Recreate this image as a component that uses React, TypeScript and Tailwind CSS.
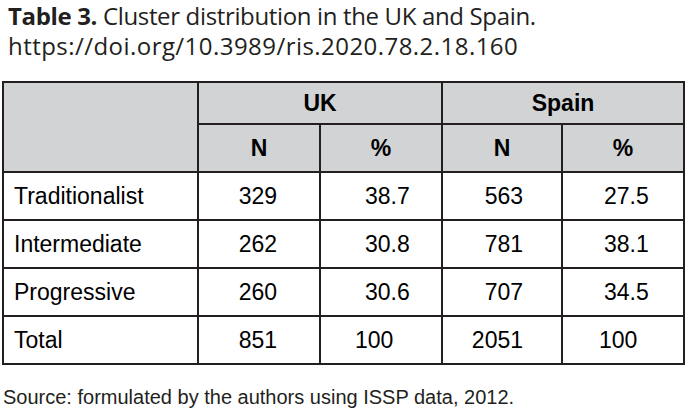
const rows = [
  { label: "Traditionalist", ukN: "329", ukP: "38.7", esN: "563", esP: "27.5" },
  { label: "Intermediate", ukN: "262", ukP: "30.8", esN: "781", esP: "38.1" },
  { label: "Progressive", ukN: "260", ukP: "30.6", esN: "707", esP: "34.5" },
];

const cell = "border-2 border-[#231f20] align-middle p-0";

export default function App() {
  return (
    <div className="w-[690px] h-[409px] bg-white text-black overflow-hidden">
      <div className="pl-[8px] pt-[1px] text-[24px] leading-[30px] font-['Open_Sans',sans-serif] text-[#231f20]">
        <p className="tracking-[-0.35px]">
          <span className="font-bold">Table 3.</span> Cluster distribution in the UK and Spain.
        </p>
        <p className="tracking-[0.45px]">https://doi.org/10.3989/ris.2020.78.2.18.160</p>
      </div>

      <table className="mt-[20px] ml-[2px] w-[681px] table-fixed border-collapse font-['Liberation_Sans',Arial,sans-serif] text-[23px] leading-none text-black">
        <colgroup>
          <col className="w-[195px]" />
          <col className="w-[122px]" />
          <col className="w-[122px]" />
          <col className="w-[120px]" />
          <col className="w-[122px]" />
        </colgroup>
        <thead className="bg-[#d1d3d4] font-bold">
          <tr className="h-[42px]">
            <th rowSpan={2} className={cell}></th>
            <th colSpan={2} className={`${cell} text-center`}>UK</th>
            <th colSpan={2} className={`${cell} text-center`}>Spain</th>
          </tr>
          <tr className="h-[48px]">
            <th className={`${cell} text-center`}>N</th>
            <th className={`${cell} text-center`}>%</th>
            <th className={`${cell} text-center`}>N</th>
            <th className={`${cell} text-center`}>%</th>
          </tr>
        </thead>
        <tbody>
          {rows.map((r) => (
            <tr key={r.label} className="h-[48px]">
              <td className={`${cell} pl-[10px]`}>{r.label}</td>
              <td className={`${cell} text-right pr-[42px]`}>{r.ukN}</td>
              <td className={`${cell} pl-[44px]`}>{r.ukP}</td>
              <td className={`${cell} text-right pr-[38px]`}>{r.esN}</td>
              <td className={`${cell} pl-[41px]`}>{r.esP}</td>
            </tr>
          ))}
          <tr className="h-[48px]">
            <td className={`${cell} pl-[10px]`}>Total</td>
            <td className={`${cell} text-right pr-[42px]`}>851</td>
            <td className={`${cell} pl-[34px]`}>100</td>
            <td className={`${cell} text-right pr-[38px]`}>2051</td>
            <td className={`${cell} pl-[36px]`}>100</td>
          </tr>
        </tbody>
      </table>

      <p className="mt-[20px] pl-[3px] font-['Liberation_Sans',Arial,sans-serif] text-[20px] leading-[24px] text-[#231f20]">
        Source: formulated by the authors using ISSP data, 2012.
      </p>
    </div>
  );
}
